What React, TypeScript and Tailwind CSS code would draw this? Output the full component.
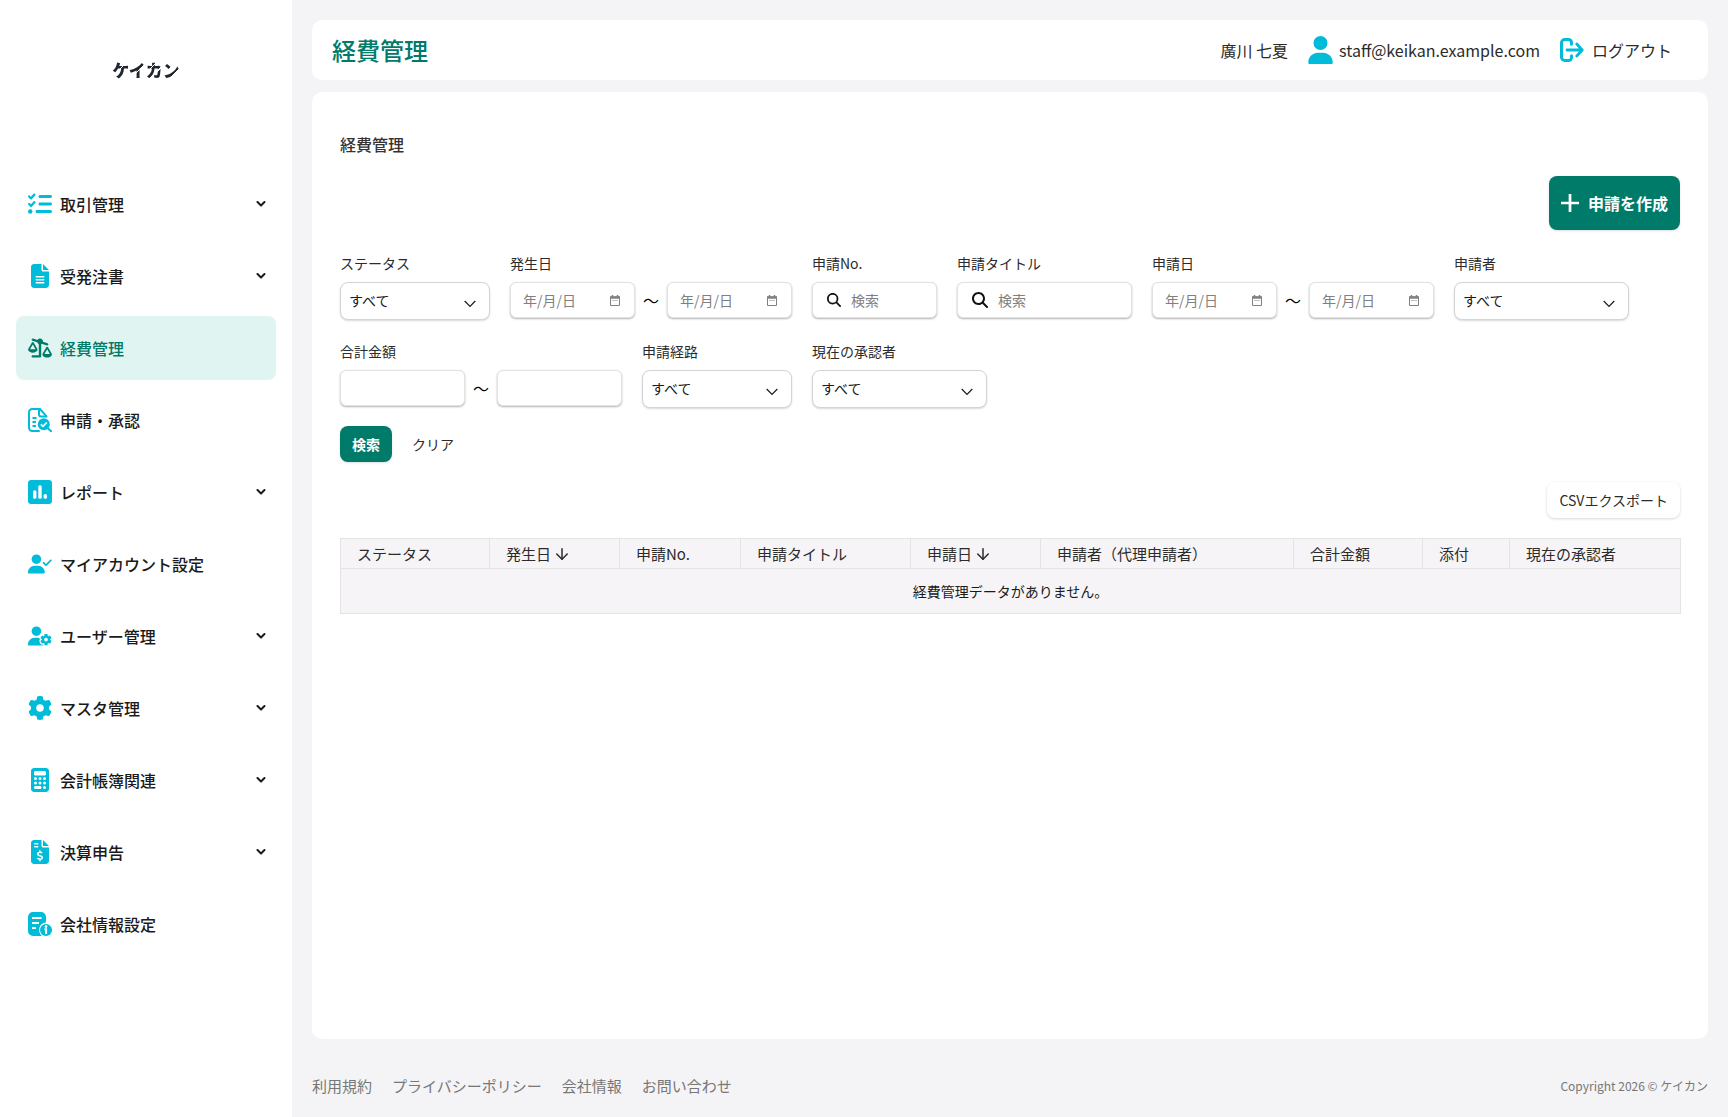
import { useId } from "react";
import type { ComponentType, ReactNode } from "react";
import {
  FaCalculator,
  FaFileInvoiceDollar,
  FaFileLines,
  FaGear,
  FaListCheck,
  FaMagnifyingGlass,
  FaScaleUnbalancedFlip,
  FaUser,
  FaUserCheck,
  FaUserGear,
} from "react-icons/fa6";
import { ArrowDown } from "lucide-react";

type IconProps = { className?: string };

const ApprovalIcon = ({ className }: IconProps) => (
  <svg viewBox="0 0 24 24" fill="none" stroke="currentColor" strokeWidth="2" className={className}>
    <path d="M11 23H4.2A3.2 3.2 0 0 1 1 19.800V4.200A3.200 3.200 0 0 1 4.200 1H12l6.500 7.400" strokeLinecap="round" />
    <path d="M11 1v5.500a2 2 0 0 0 2 2h5.700" />
    <path d="M4.500 10h4M4.500 14h3.500M4.500 18h3.500" strokeWidth="1.800" />
    <circle cx="15.800" cy="16.300" r="6" fill="currentColor" stroke="none" />
    <path d="M20 20.500l3.200 2.800" strokeLinecap="round" />
    <path d="M12.800 16.300l2.200 2.100 3.800-3.900" stroke="#fff" strokeWidth="1.700" />
  </svg>
);

const ReportIcon = ({ className }: IconProps) => (
  <svg viewBox="0 0 24 24" fill="currentColor" className={className}>
    <rect width="24" height="24" rx="3.200" />
    <g fill="#fff">
      <rect x="5" y="10.300" width="3.400" height="8.500" rx="1.500" />
      <rect x="10.300" y="5.200" width="3.400" height="13.600" rx="1.500" />
      <rect x="15.600" y="14" width="3.400" height="4.800" rx="1.500" />
    </g>
  </svg>
);

const CompanyIcon = ({ className }: IconProps) => (
  <svg viewBox="0 0 24 24" fill="currentColor" className={className}>
    <path d="M5 0h8a5 5 0 0 1 5 5v5.500a7.500 7.500 0 0 0-6.300 10.500q.8 1.800 2.200 3H5a5 5 0 0 1-5-5V5a5 5 0 0 1 5-5z" />
    <path d="M4 6h9.500M4 11h7M4 16h4" stroke="#fff" strokeWidth="2" fill="none" />
    <circle cx="18" cy="18" r="6" />
    <path d="M16.500 17.300h1.600V22" stroke="#fff" strokeWidth="2" fill="none" />
    <circle cx="18" cy="14.600" r="1.300" fill="#fff" />
  </svg>
);

const LogoutIcon = ({ className }: IconProps) => (
  <svg viewBox="0 0 24 24" fill="none" stroke="currentColor" strokeWidth="3" strokeLinecap="round" strokeLinejoin="round" className={className}>
    <path d="M11.500 6.200V4.500a3 3 0 0 0-3-3H4.800a3.300 3.300 0 0 0-3.300 3.300v14.400a3.300 3.300 0 0 0 3.300 3.300h3.700a3 3 0 0 0 3-3v-1.700" />
    <path d="M7 12h14.500M16.800 6l5.400 6-5.400 6" strokeWidth="2.800" />
  </svg>
);

const MenuChevron = () => (
  <svg viewBox="0 0 10 6" fill="none" stroke="currentColor" strokeWidth="2" strokeLinecap="round" strokeLinejoin="round" className="ml-auto h-1.5 w-2.5">
    <path d="M1.500 1L5 4.500 8.500 1" />
  </svg>
);

const CalendarIcon = () => (
  <svg viewBox="0 0 10 11" fill="none" stroke="currentColor" className="h-[11px] w-[10px]">
    <path d="M.5 2h9v8.500h-9z" />
    <path d="M0 2.500h10" strokeWidth="2.500" />
    <path d="M2.500 0v2M7.500 0v2" strokeWidth="1.500" />
    <path d="M2.500 5.500h1M4.500 5.500h1M6.500 5.500h1" />
  </svg>
);

const menu: { label: string; icon: ComponentType<IconProps>; expandable?: boolean; active?: boolean }[] = [
  { label: "取引管理", icon: FaListCheck, expandable: true },
  { label: "受発注書", icon: FaFileLines, expandable: true },
  { label: "経費管理", icon: FaScaleUnbalancedFlip, active: true },
  { label: "申請・承認", icon: ApprovalIcon },
  { label: "レポート", icon: ReportIcon, expandable: true },
  { label: "マイアカウント設定", icon: FaUserCheck },
  { label: "ユーザー管理", icon: FaUserGear, expandable: true },
  { label: "マスタ管理", icon: FaGear, expandable: true },
  { label: "会計帳簿関連", icon: FaCalculator, expandable: true },
  { label: "決算申告", icon: FaFileInvoiceDollar, expandable: true },
  { label: "会社情報設定", icon: CompanyIcon },
];

const columns = [
  { title: "ステータス", width: "w-[149px]" },
  { title: "発生日", width: "w-[130px]", sortable: true },
  { title: "申請No.", width: "w-[121px]" },
  { title: "申請タイトル", width: "w-[170px]" },
  { title: "申請日", width: "w-[130px]", sortable: true },
  { title: "申請者（代理申請者）", width: "w-[253px]" },
  { title: "合計金額", width: "w-[129px]" },
  { title: "添付", width: "w-[87px]" },
  { title: "現在の承認者", width: "w-[171px]" },
];

const footerLinks = ["利用規約", "プライバシーポリシー", "会社情報", "お問い合わせ"];

const boxClass =
  "flex h-9 items-center rounded-md border border-[#e2e2e2] bg-white shadow-[0_1px_2px_rgba(0,0,0,0.3)]";

const Sidebar = () => (
  <aside className="w-[292px] shrink-0 bg-white px-4 pb-10">
    <div className="flex h-[172px] justify-center pt-[58px]">
      <span className="h-6 bg-[repeating-linear-gradient(135deg,#1f2630_0px,#1f2630_6px,#fff_6px,#fff_7px)] bg-clip-text text-[17px] leading-6 font-black text-transparent">
        ケイカン
      </span>
    </div>
    <nav className="flex flex-col gap-2">
      {menu.map((item) => (
        <a
          key={item.label}
          href="#"
          className={`flex h-16 items-center gap-2 rounded-lg pr-2.5 pl-3 font-medium ${
            item.active ? "bg-[#e0f5f2] text-[#007a69]" : "text-[#1a1a1a]"
          }`}
        >
          <item.icon className={`size-6 shrink-0 ${item.active ? "" : "text-[#00bcd8]"}`} />
          {item.label}
          {item.expandable && <MenuChevron />}
        </a>
      ))}
    </nav>
  </aside>
);

const Header = () => (
  <header className="flex h-15 items-center rounded-[10px] bg-white pr-9 pl-5">
    <h1 className="text-2xl font-medium text-[#007a69]">経費管理</h1>
    <div className="ml-auto flex items-center gap-5">
      <span>廣川 七夏</span>
      <a href="#" className="flex items-center gap-1.5">
        <FaUser className="h-7 w-[25px] text-[#00bcd8]" />
        staff@keikan.example.com
      </a>
      <button type="button" className="flex items-center gap-2">
        <LogoutIcon className="size-6 text-[#00bcd8]" />
        ログアウト
      </button>
    </div>
  </header>
);

const Field = ({ label, htmlFor, children }: { label: string; htmlFor: string; children: ReactNode }) => (
  <div className="flex flex-col gap-2">
    <label htmlFor={htmlFor} className="text-sm leading-[22px]">
      {label}
    </label>
    {children}
  </div>
);

const SelectField = ({ label, width }: { label: string; width: string }) => {
  const id = useId();
  return (
    <Field label={label} htmlFor={id}>
      <div className={`relative ${width}`}>
        <select
          id={id}
          className="h-[38px] w-full appearance-none rounded-lg border border-[#d4d4d4] bg-white pr-8 pb-0.5 pl-2 text-sm text-[#1a1a1a] shadow-[0_1px_2px_rgba(0,0,0,0.15)]"
        >
          <option>すべて</option>
        </select>
        <svg viewBox="0 0 12 8" fill="none" stroke="#1a1a1a" strokeWidth="1.200" className="pointer-events-none absolute top-[18px] right-3.5 h-2 w-3">
          <path d="M.7 1L6 6.500 11.300 1" />
        </svg>
      </div>
    </Field>
  );
};

const DateInput = ({ id, label }: { id?: string; label?: string }) => (
  <div className={`${boxClass} w-[125px] justify-between pr-3.5 pl-3`}>
    <input
      id={id}
      aria-label={label}
      type="text"
      placeholder="年/月/日"
      className="w-16 text-sm outline-none placeholder:text-[#808080]"
    />
    <button type="button" aria-label="カレンダー" className="text-[#808080]">
      <CalendarIcon />
    </button>
  </div>
);

const DateRange = ({ label }: { label: string }) => {
  const id = useId();
  return (
    <Field label={label} htmlFor={id}>
      <div className="flex items-center">
        <DateInput id={id} />
        <span className="w-8 text-center text-black">〜</span>
        <DateInput label={`${label}（終了）`} />
      </div>
    </Field>
  );
};

const AmountRange = ({ label }: { label: string }) => {
  const id = useId();
  return (
    <Field label={label} htmlFor={id}>
      <div className="flex items-center">
        <input id={id} type="text" className={`${boxClass} w-[125px] px-3 text-sm`} />
        <span className="w-8 text-center text-black">〜</span>
        <input type="text" aria-label={`${label}（上限）`} className={`${boxClass} w-[125px] px-3 text-sm`} />
      </div>
    </Field>
  );
};

const SearchField = ({ label, width, iconSize }: { label: string; width: string; iconSize: string }) => {
  const id = useId();
  return (
    <Field label={label} htmlFor={id}>
      <div className={`${boxClass} ${width} gap-2.5 px-3.5`}>
        <FaMagnifyingGlass className={`${iconSize} shrink-0 text-[#111]`} />
        <input
          id={id}
          type="text"
          placeholder="検索"
          className="w-full min-w-0 text-sm outline-none placeholder:text-[#808080]"
        />
      </div>
    </Field>
  );
};

const Filters = () => (
  <form className="mt-[22px]">
    <div className="flex flex-wrap gap-5">
      <SelectField label="ステータス" width="w-[150px]" />
      <DateRange label="発生日" />
      <SearchField label="申請No." width="w-[125px]" iconSize="size-3.5" />
      <SearchField label="申請タイトル" width="w-[175px]" iconSize="size-4" />
      <DateRange label="申請日" />
      <SelectField label="申請者" width="w-[175px]" />
      <AmountRange label="合計金額" />
      <SelectField label="申請経路" width="w-[150px]" />
      <SelectField label="現在の承認者" width="w-[175px]" />
    </div>
    <div className="mt-[18px] flex items-center gap-5">
      <button type="button" className="h-9 rounded-lg bg-[#007a69] px-3 text-sm font-bold text-white shadow-sm">
        検索
      </button>
      <button type="reset" className="text-sm">
        クリア
      </button>
    </div>
  </form>
);

const ExpenseTable = () => (
  <table className="mt-5 w-full table-fixed border-collapse border border-[#e4e4e4] bg-[#f6f4f6]">
    <thead>
      <tr className="h-[30px]">
        {columns.map((col) => (
          <th
            key={col.title}
            className={`${col.width} border border-[#e4e4e4] pl-4 text-left text-[15px] leading-6 font-normal whitespace-nowrap`}
          >
            {col.sortable ? (
              <button type="button" className="flex items-center gap-0.5">
                {col.title}
                <ArrowDown className="size-[18px]" strokeWidth={2} />
              </button>
            ) : (
              col.title
            )}
          </th>
        ))}
      </tr>
    </thead>
    <tbody>
      <tr className="h-[45px]">
        <td colSpan={columns.length} className="text-center text-sm text-[#1a1a1a]">
          経費管理データがありません。
        </td>
      </tr>
    </tbody>
  </table>
);

const App = () => {
  return (
    <div className="flex min-h-screen bg-[#f4f4f6] font-['Noto_Sans_CJK_JP',sans-serif] text-base text-[#2b2b2b]">
      <Sidebar />
      <div className="flex min-w-0 flex-1 flex-col px-5 pt-5">
        <Header />
        <main className="mt-3 flex-1 rounded-[10px] bg-white px-7 pt-10 pb-7">
          <h2 className="text-base font-medium text-[#333]">経費管理</h2>
          <div className="mt-5 flex justify-end">
            <button
              type="button"
              className="flex h-[54px] items-center gap-[9px] rounded-lg bg-[#007a69] px-3 font-bold text-white shadow-sm"
            >
              <svg viewBox="0 0 18 18" stroke="currentColor" strokeWidth="2.700" className="size-[18px]">
                <path d="M9 0v18M0 9h18" />
              </svg>
              申請を作成
            </button>
          </div>
          <Filters />
          <div className="mt-5 flex justify-end">
            <button type="button" className="h-9 rounded-lg bg-white px-3 text-sm shadow-[0_1px_3px_rgba(0,0,0,0.16)]">
              CSVエクスポート
            </button>
          </div>
          <ExpenseTable />
        </main>
        <footer className="flex h-[78px] items-center justify-between pt-4 text-[#777]">
          <nav className="flex gap-5 text-[15px]">
            {footerLinks.map((link) => (
              <a key={link} href="#">
                {link}
              </a>
            ))}
          </nav>
          <small className="text-xs">Copyright 2026 © ケイカン</small>
        </footer>
      </div>
    </div>
  );
};

export default App;
